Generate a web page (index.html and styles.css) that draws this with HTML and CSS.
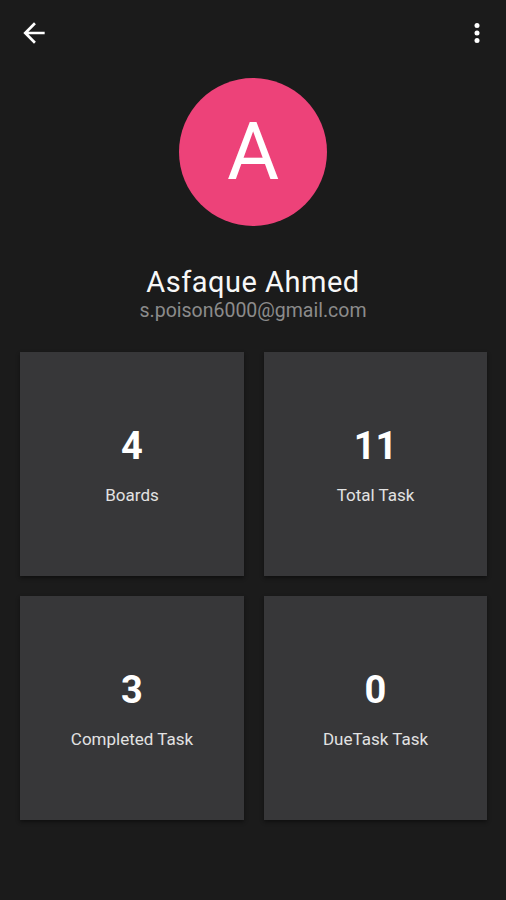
FILE: index.html
```html
<!DOCTYPE html>
<html lang="en">
<head>
<meta charset="utf-8">
<title>Profile</title>
<link rel="stylesheet" href="styles.css">
</head>
<body>
<div class="screen">
  <header class="topbar">
    <svg class="icon-back" viewBox="0 0 24 24" width="32" height="32" aria-label="Back">
      <path d="M20 11H7.83l5.59-5.59L12 4l-8 8 8 8 1.41-1.41L7.83 13H20v-2z" fill="#ffffff"/>
    </svg>
    <svg class="icon-more" viewBox="0 0 24 24" width="30" height="30" aria-label="More">
      <circle cx="12" cy="6" r="2" fill="#ffffff"/>
      <circle cx="12" cy="12" r="2" fill="#ffffff"/>
      <circle cx="12" cy="18" r="2" fill="#ffffff"/>
    </svg>
  </header>

  <section class="profile">
    <div class="avatar">A</div>
    <div class="name">Asfaque Ahmed</div>
    <div class="email">s.poison6000@gmail.com</div>
  </section>

  <section class="stats">
    <div class="card">
      <div class="num">4</div>
      <div class="label">Boards</div>
    </div>
    <div class="card">
      <div class="num">11</div>
      <div class="label">Total Task</div>
    </div>
    <div class="card">
      <div class="num">3</div>
      <div class="label">Completed Task</div>
    </div>
    <div class="card">
      <div class="num">0</div>
      <div class="label">DueTask Task</div>
    </div>
  </section>
</div>
</body>
</html>
```
FILE: styles.css
```css
html, body {
  margin: 0;
  padding: 0;
  background: #1b1b1b;
}
body {
  font-family: Roboto, "Noto Sans", "Liberation Sans", sans-serif;
  color: #ffffff;
}
.screen {
  width: 506px;
  height: 900px;
  background: #1b1b1b;
  overflow: hidden;
}
.topbar {
  height: 66px;
  display: flex;
  justify-content: space-between;
  align-items: center;
  padding: 0 14px 0 18px;
}
.icon-back, .icon-more {
  display: block;
}
.profile {
  display: flex;
  flex-direction: column;
  align-items: center;
}
.avatar {
  margin-top: 12px;
  width: 148px;
  height: 148px;
  border-radius: 50%;
  background: #ed4279;
  color: #ffffff;
  font-size: 80px;
  line-height: 148px;
  text-align: center;
  font-weight: 400;
}
.name {
  margin-top: 39px;
  font-size: 29px;
  line-height: 34px;
  color: #f7f7f7;
  letter-spacing: 0.5px;
}
.email {
  font-size: 19.5px;
  line-height: 24px;
  color: #8b8b8b;
}
.stats {
  margin-top: 29px;
  padding: 0 19px 0 20px;
  display: grid;
  grid-template-columns: 224px 223px;
  grid-auto-rows: 224px;
  gap: 20px;
}
.card {
  background: #373739;
  box-shadow: 0 2px 4px rgba(0, 0, 0, 0.45);
  display: flex;
  flex-direction: column;
  align-items: center;
  justify-content: center;
}
.num {
  font-size: 38px;
  line-height: 44px;
  font-weight: 700;
  color: #ffffff;
}
.label {
  margin-top: 17px;
  font-size: 17px;
  line-height: 20px;
  color: #e2e2e2;
}
```
